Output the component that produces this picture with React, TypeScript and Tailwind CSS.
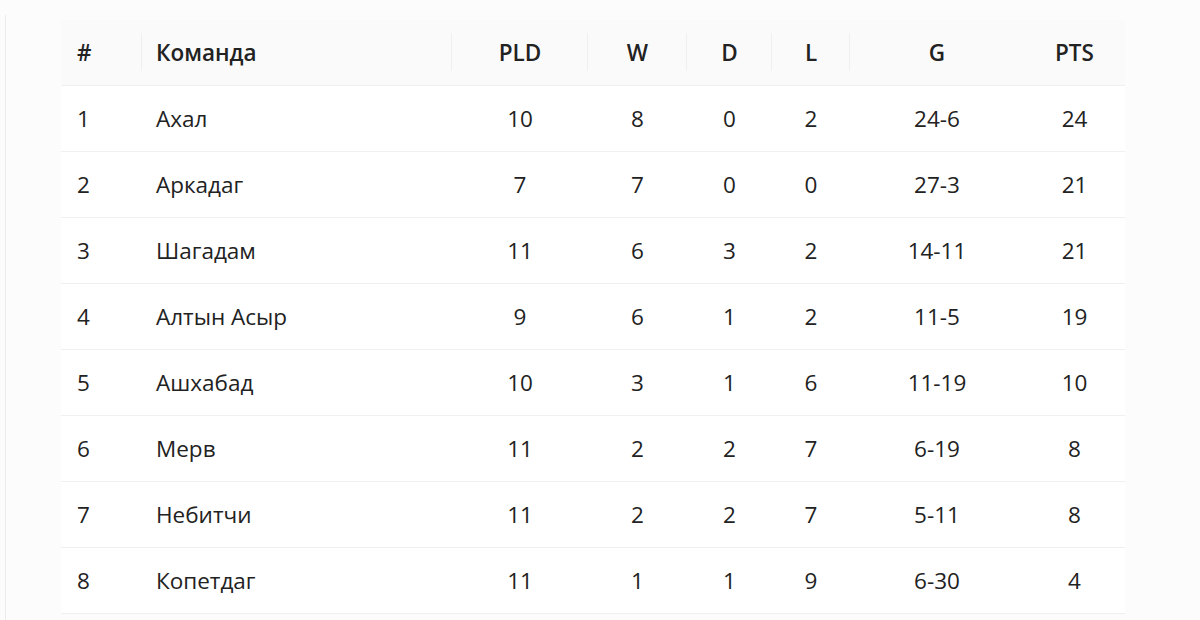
import React from "react";

const rows = [
  ["1", "Ахал", "10", "8", "0", "2", "24-6", "24"],
  ["2", "Аркадаг", "7", "7", "0", "0", "27-3", "21"],
  ["3", "Шагадам", "11", "6", "3", "2", "14-11", "21"],
  ["4", "Алтын Асыр", "9", "6", "1", "2", "11-5", "19"],
  ["5", "Ашхабад", "10", "3", "1", "6", "11-19", "10"],
  ["6", "Мерв", "11", "2", "2", "7", "6-19", "8"],
  ["7", "Небитчи", "11", "2", "2", "7", "5-11", "8"],
  ["8", "Копетдаг", "11", "1", "1", "9", "6-30", "4"],
];

const widths = [81, 310, 136, 99, 85, 78, 174, 101];
const heads = ["#", "Команда", "PLD", "W", "D", "L", "G", "PTS"];

export default function App() {
  return (
    <div
      className="w-[1200px] h-[620px] overflow-hidden bg-[#fcfcfc] pl-[5px] pt-[15px]"
      style={{ fontFamily: '"Open Sans", "Noto Sans", sans-serif' }}
    >
      <div className="h-full border-l border-[#ececec] pl-[55px] pt-[5px]">
        <table className="table-fixed border-collapse w-[1064px] text-[22.5px] text-[#222222]">
          <colgroup>
            {widths.map((w, i) => (
              <col key={i} style={{ width: w }} />
            ))}
          </colgroup>
          <thead>
            <tr className="h-[65px] bg-[#fafafa]">
              {heads.map((h, i) => (
                <th
                  key={h}
                  className={`relative pt-[2px] font-semibold border-b border-[#f0f0f0] ${
                    i === 0 ? "text-left pl-[16px]" : i === 1 ? "text-left pl-[14px]" : "text-center"
                  }`}
                >
                  {h}
                  {i < 6 && (
                    <span className="absolute right-0 top-1/2 -translate-y-1/2 h-[38px] w-px bg-[#efefef]" />
                  )}
                </th>
              ))}
            </tr>
          </thead>
          <tbody className="bg-white">
            {rows.map((r) => (
              <tr key={r[0]} className="h-[66px]">
                {r.map((c, i) => (
                  <td
                    key={i}
                    className={`pt-[2px] border-b border-[#f0f0f0] ${
                      i === 0 ? "text-left pl-[16px]" : i === 1 ? "text-left pl-[14px]" : "text-center"
                    }`}
                  >
                    {c}
                  </td>
                ))}
              </tr>
            ))}
          </tbody>
        </table>
      </div>
    </div>
  );
}
